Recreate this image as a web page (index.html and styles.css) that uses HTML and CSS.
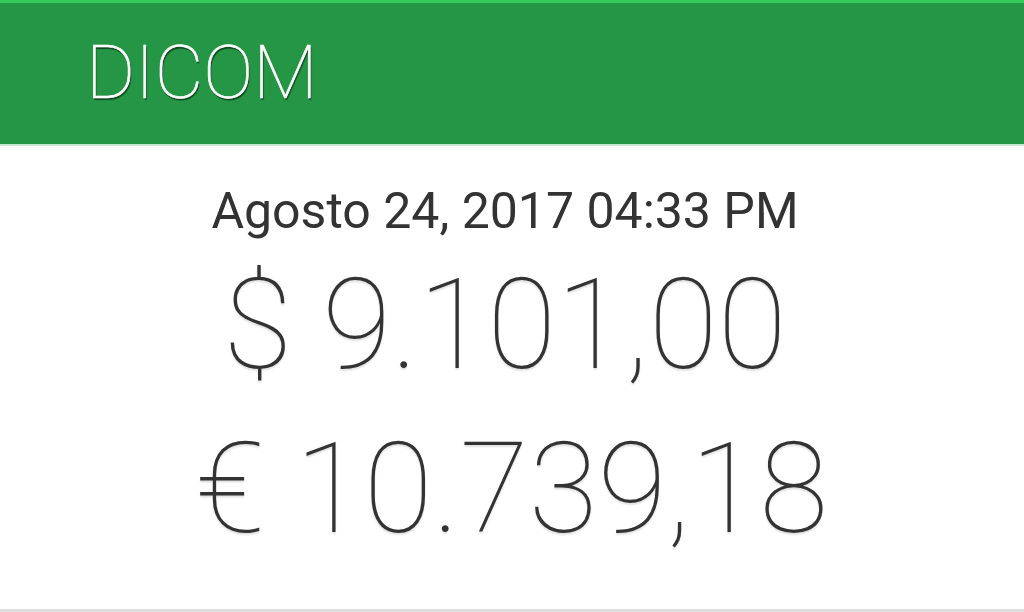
FILE: index.html
```html
<!DOCTYPE html>
<html>
<head>
<meta charset="utf-8">
<link rel="stylesheet" href="styles.css">
</head>
<body>
<div class="app">
  <header class="topbar">
    <h1 class="brand">DICOM</h1>
  </header>
  <main class="content">
    <div class="date">Agosto 24, 2017 04:33 PM</div>
    <div class="amount usd">$ 9.101,00</div>
    <div class="amount eur">€ 10.739,18</div>
  </main>
  <div class="footer-line"></div>
</div>
</body>
</html>
```
FILE: styles.css
```css
html, body {
  margin: 0;
  padding: 0;
  background: #fff;
}
.app {
  width: 1024px;
  height: 612px;
  display: flex;
  flex-direction: column;
  overflow: hidden;
  font-family: Roboto, "Noto Sans", sans-serif;
}
.topbar {
  height: 141px;
  background: #259645;
  border-top: 3px solid #34cc58;
  border-bottom: 2px solid #c9e6d0;
  box-sizing: content-box;
  display: flex;
  align-items: center;
  padding-left: 86px;
  flex-shrink: 0;
}
.brand {
  margin: 0 0 3px 0;
  font-size: 75px;
  font-weight: 100;
  color: #fff;
  line-height: 1;
  text-shadow: 1px 2px 1px rgba(0,0,0,0.55);
  -webkit-text-stroke: 0.6px rgba(255,255,255,1);
}
.content {
  flex: 1;
  display: flex;
  flex-direction: column;
  align-items: center;
  padding-top: 40px;
}
.date {
  font-size: 50px;
  font-weight: 400;
  color: #333;
  line-height: 1;
  margin-left: -14px;
}
.amount {
  font-size: 126px;
  font-weight: 100;
  color: #333;
  line-height: 1;
  text-shadow: 0 2px 2px rgba(0,0,0,0.12);
}
.usd {
  margin-top: 26px;
  margin-left: -14px;
}
.eur {
  margin-top: 38px;
}
.footer-line {
  height: 3px;
  background: #dcdcdc;
  flex-shrink: 0;
}
```
